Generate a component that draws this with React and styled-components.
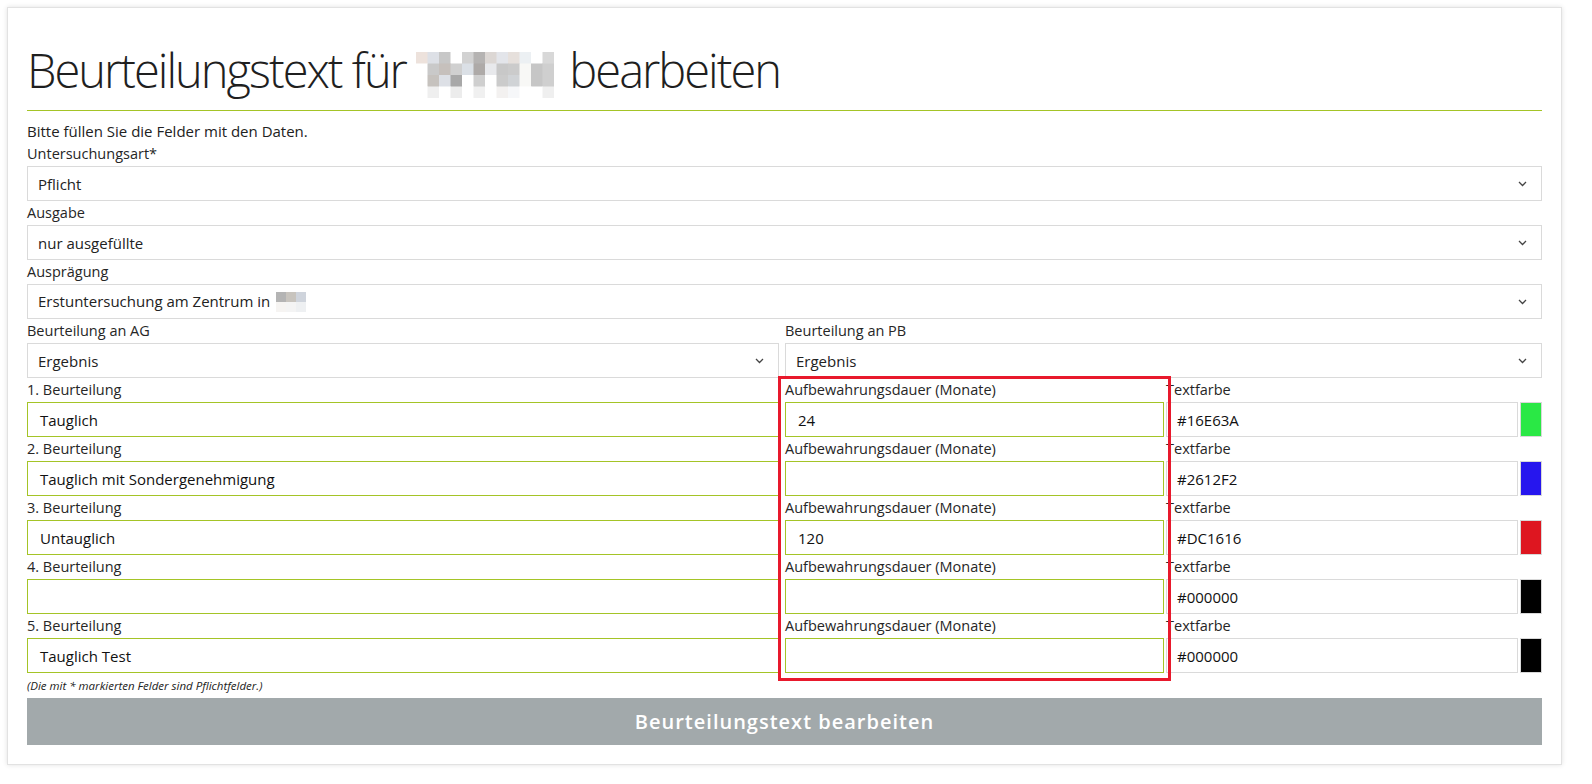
import styled, { createGlobalStyle } from "styled-components";

const GlobalStyle = createGlobalStyle`
    body {
        margin: 0;
        padding: 7px;
        background: #ffffff;
        font-family: "Segoe UI", "Open Sans", "Noto Sans", sans-serif;
        color: #222222;
    }
    * { box-sizing: border-box; }
`;

const GREEN = "#a4c427";

const titleMosaic = [
    ["#ede2dc", "#dde0e6", "#c7c7c7", "#ffffff", "#d2d2d2", "#b5b3b2", "#dcd7d4", "#e3e5ea", "#e6e0dc", "#ecf0f3", "#ffffff", "#d8d8d8"],
    ["#ffffff", "#c9c9c9", "#c6c0bc", "#d0d0d0", "#dbe0e6", "#aeaaa8", "#e8e9ec", "#c8c8c8", "#cbcbcb", "#f8f8f6", "#c6c6c6", "#cfcfcf"],
    ["#ffffff", "#c6c2be", "#dde0e6", "#a8a8a8", "#ffffff", "#cfcfcf", "#ffffff", "#cbcbcb", "#d0d3d6", "#f8f8f6", "#c6c6c6", "#cfcfcf"],
    ["#ffffff", "#efefef", "#ffffff", "#ececec", "#ffffff", "#f0f0f0", "#ffffff", "#f3f1f0", "#f6f7f9", "#ffffff", "#ffffff", "#efefef"],
];

const placeMosaic = [
    ["#b4b4b4", "#c8c4be", "#cfd4dc"],
    ["#f6f4f2", "#f4f4f4", "#eef0f2"],
];

const Mosaic = ({ cells, size }) => (
    <svg width={cells[0].length * size} height={cells.length * size} style={{ display: "inline-block" }}>
        {cells.map((row, r) =>
            row.map((c, i) => (
                <rect key={r + "-" + i} x={i * size} y={r * size} width={size + 0.5} height={size + 0.5} fill={c} />
            ))
        )}
    </svg>
);

const Chevron = () => (
    <svg width="9" height="6" viewBox="0 0 9 6">
        <path d="M1 1 L4.5 4.5 L8 1" fill="none" stroke="#444" strokeWidth="1.3" />
    </svg>
);

const beurteilungen = [
    { text: "Tauglich", dauer: "24", farbe: "#16E63A", swatch: "#2ae845" },
    { text: "Tauglich mit Sondergenehmigung", dauer: "", farbe: "#2612F2", swatch: "#2616ee" },
    { text: "Untauglich", dauer: "120", farbe: "#DC1616", swatch: "#de1620" },
    { text: "", dauer: "", farbe: "#000000", swatch: "#000000" },
    { text: "Tauglich Test", dauer: "", farbe: "#000000", swatch: "#000000" },
];

const App = () => {
    return (
        <>
            <GlobalStyle />
            <Card>
                <Titel>
                    Beurteilungstext für <TitelBlur><Mosaic cells={titleMosaic} size={11.5} /></TitelBlur> bearbeiten
                </Titel>
                <Intro>Bitte füllen Sie die Felder mit den Daten.</Intro>

                <Label>Untersuchungsart*</Label>
                <Auswahl><span>Pflicht</span><Chevron /></Auswahl>

                <Label>Ausgabe</Label>
                <Auswahl><span>nur ausgefüllte</span><Chevron /></Auswahl>

                <Label>Ausprägung</Label>
                <Auswahl>
                    <span>Erstuntersuchung am Zentrum in <PlaceBlur><Mosaic cells={placeMosaic} size={10} /></PlaceBlur></span>
                    <Chevron />
                </Auswahl>

                <Zeile>
                    <Zelle breite="752px">
                        <Label>Beurteilung an AG</Label>
                        <Auswahl><span>Ergebnis</span><Chevron /></Auswahl>
                    </Zelle>
                    <Zelle abstand="6px">
                        <Label>Beurteilung an PB</Label>
                        <Auswahl><span>Ergebnis</span><Chevron /></Auswahl>
                    </Zelle>
                </Zeile>

                <Tabelle>
                    {beurteilungen.map((b, i) => (
                        <Zeile key={i}>
                            <Zelle breite="752px">
                                <Label>{i + 1}. Beurteilung</Label>
                                <Eingabe>{b.text}</Eingabe>
                            </Zelle>
                            <Zelle breite="379px" abstand="6px">
                                <Label>Aufbewahrungsdauer (Monate)</Label>
                                <Eingabe>{b.dauer}</Eingabe>
                            </Zelle>
                            <Zelle abstand="2px">
                                <Label>Textfarbe</Label>
                                <FarbZeile>
                                    <FarbFeld>{b.farbe}</FarbFeld>
                                    <Swatch farbe={b.swatch} />
                                </FarbZeile>
                            </Zelle>
                        </Zeile>
                    ))}
                    <Markierung />
                </Tabelle>

                <Hinweis>(Die mit * markierten Felder sind Pflichtfelder.)</Hinweis>
                <Absenden>Beurteilungstext bearbeiten</Absenden>
            </Card>
        </>
    );
};

const Card = styled.div`
    width: 1555px;
    height: 758px;
    padding: 0 19px 20px 19px;
    border: 1px solid #e2e2e2;
    box-shadow: 0 0 5px rgba(0, 0, 0, 0.12);
    background: #ffffff;
`;

const Titel = styled.h1`
    margin: 0;
    padding-top: 30px;
    padding-bottom: 8px;
    font-size: 47px;
    font-weight: 300;
    line-height: 64px;
    color: #1f1f1f;
    letter-spacing: -2px;
    border-bottom: 1px solid ${GREEN};
    display: flex;
    align-items: center;
    white-space: pre;
`;

const TitelBlur = styled.span`
    display: inline-flex;
    margin-top: 10px;
    margin-right: 5px;
`;

const PlaceBlur = styled.span`
    display: inline-flex;
    vertical-align: middle;
    margin-left: 2px;
`;

const Intro = styled.div`
    padding-top: 10px;
    height: 31px;
    font-size: 15px;
    line-height: 20px;
`;

const Label = styled.div`
    height: 24px;
    font-size: 14.5px;
    line-height: 24px;
    color: #262626;
    white-space: nowrap;
`;

const Auswahl = styled.div`
    height: 35px;
    border: 1px solid #dadada;
    padding: 0 14px 0 10px;
    display: flex;
    align-items: center;
    justify-content: space-between;
    font-size: 15px;
    color: #222;
`;

const Zeile = styled.div`
    display: flex;
`;

const Zelle = styled.div`
    flex: ${(props) => (props.breite ? `0 0 ${props.breite}` : "1 1 auto")};
    margin-left: ${(props) => props.abstand || "0"};
    min-width: 0;
`;

const Tabelle = styled.div`
    position: relative;
`;

const Eingabe = styled.div`
    height: 35px;
    border: 1px solid ${GREEN};
    padding: 0 12px;
    display: flex;
    align-items: center;
    font-size: 15px;
    color: #111;
`;

const FarbZeile = styled.div`
    display: flex;
    height: 35px;
`;

const FarbFeld = styled.div`
    flex: 1;
    border: 1px solid #dadada;
    padding: 0 10px;
    display: flex;
    align-items: center;
    font-size: 15px;
    color: #111;
`;

const Swatch = styled.div`
    width: 22px;
    margin-left: 2px;
    border: 1px solid #d8d8d8;
    background: ${(props) => props.farbe};
`;

const Markierung = styled.div`
    position: absolute;
    top: -2px;
    left: 751px;
    width: 393px;
    height: 305px;
    border: 3px solid #e8192c;
    pointer-events: none;
`;

const Hinweis = styled.div`
    height: 25px;
    font-size: 11.5px;
    font-style: italic;
    line-height: 25px;
    color: #222;
`;

const Absenden = styled.button`
    display: block;
    width: 100%;
    height: 47px;
    border: none;
    background: #a2a9ab;
    color: #ffffff;
    font-family: inherit;
    font-size: 20px;
    font-weight: 600;
    letter-spacing: 1px;
`;

export default App;
